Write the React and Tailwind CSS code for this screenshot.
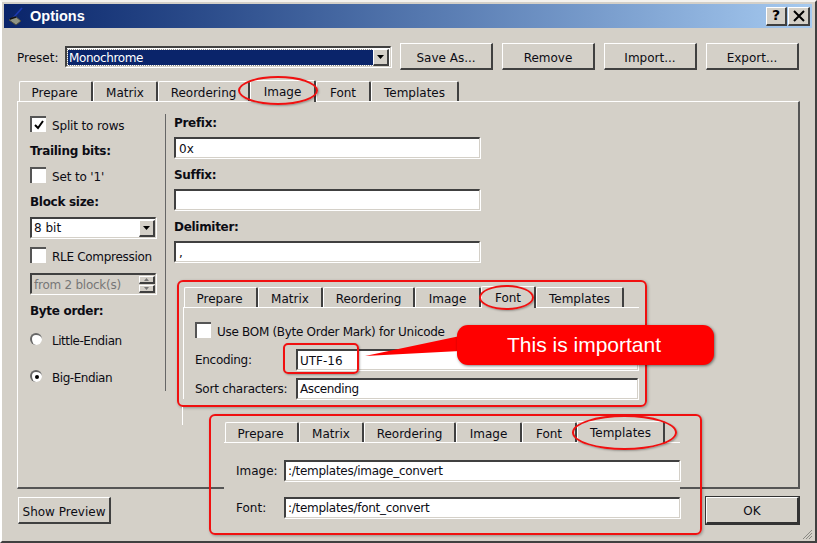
const tabs = [
  ['Prepare', 74],
  ['Matrix', 65],
  ['Reordering', 92],
  ['Image', 66],
  ['Font', 55],
  ['Templates', 88],
];

const raised = 'border-t border-l border-t-white border-l-white border-r-2 border-b-2 border-r-[#404040] border-b-[#404040]';
const sunken = 'border-t-2 border-l-2 border-t-[#404040] border-l-[#404040] border-r border-b border-r-[#d4d0c8] border-b-[#d4d0c8] shadow-[1px_1px_0_#fff]';

function Arrow() {
  return (
    <svg width="7" height="4" viewBox="0 0 7 4"><path d="M0 0h7L3.500 4z" fill="#000" /></svg>
  );
}

function TabBar({ selected }) {
  return (
    <div className="flex items-end h-[22px]">
      {tabs.map(([label, w], i) => (
        <div
          key={label}
          style={{ width: w }}
          className={
            'flex items-center justify-center border-t border-l border-t-white border-l-white border-r-2 border-r-[#404040] rounded-t-[2px] ' +
            (i === 0 ? 'pr-[2px] ' : '') +
            (i === selected ? 'h-[22px] relative z-10 -mb-px pt-px bg-[#d4d0c8]' : 'h-[20px] pt-[2px]')
          }
        >
          {label}
        </div>
      ))}
    </div>
  );
}

function Button({ w, children }) {
  return (
    <div style={{ width: w }} className={`h-[27px] pt-[3px] ${raised} flex items-center justify-center`}>
      {children}
    </div>
  );
}

function Field({ className = '', children }) {
  return (
    <div className={`${sunken} h-[21px] bg-white flex items-center pl-[2px] ${className}`}>{children}</div>
  );
}

function Heading({ className, children }) {
  return <div className={`h-[16px] pt-px font-bold tracking-[-0.3px] ${className}`}>{children}</div>;
}

function Check({ checked, label, tight = 'tracking-[-0.15px]' }) {
  return (
    <div className="flex items-center h-[16px] whitespace-nowrap">
      <div className="w-[16px] h-[16px] bg-white border-t-2 border-l-2 border-t-[#555] border-l-[#555] flex items-center justify-center shrink-0">
        {checked && (
          <svg width="10" height="10" viewBox="0 0 10 10">
            <path d="M1 5l3 3 5-7" fill="none" stroke="#000" strokeWidth="2" />
          </svg>
        )}
      </div>
      <span className={`ml-[6px] mt-[3px] ${tight}`}>{label}</span>
    </div>
  );
}

function Radio({ on, label, className }) {
  return (
    <div className={`flex h-[16px] ${className}`}>
      <div className="w-[12px] h-[12px] mt-px rounded-full bg-white border-t-2 border-l-2 border-t-[#666] border-l-[#666] flex items-center justify-center shrink-0">
        {on && <div className="w-[4px] h-[4px] rounded-full bg-black" />}
      </div>
      <span className="ml-[10px] tracking-[-0.45px]">{label}</span>
    </div>
  );
}

function ComboArrow() {
  return (
    <div className={`${raised} w-[16px] h-[17px] ml-auto flex items-center justify-center bg-[#d4d0c8]`}>
      <Arrow />
    </div>
  );
}

function SpinPart({ up }) {
  return (
    <div className={`${raised} w-[16px] h-[8px] flex items-center justify-center`}>
      <svg width="5" height="3" viewBox="0 0 5 3">
        <path d={up ? 'M0 3h5L2.500 0z' : 'M0 0h5L2.500 3z'} fill="#777" />
      </svg>
    </div>
  );
}

function Ring({ className }) {
  return <div className={`absolute rounded-[50%] border-2 border-[#f01010] shadow-[1px_1px_2px_rgba(0,0,0,0.3)] z-20 ${className}`} />;
}

export default function App() {
  return (
    <div
      className="relative w-[817px] h-[543px] overflow-hidden bg-[#d4d0c8] text-[12px] text-[#0c0c14] p-[3px] pt-[2px] border-l-2 border-t-2 border-l-white border-t-[#f4f2ee] border-r-2 border-b-2 border-r-[#404040] border-b-[#404040]"
      style={{ fontFamily: '"DejaVu Sans", sans-serif' }}
    >
      {/* title bar */}
      <div className="h-[24px] -ml-px flex items-center bg-gradient-to-r from-[#0a246a] to-[#a6caf0] text-white pl-[4px] pr-[2px]">
        <svg width="19" height="19" viewBox="0 0 19 19" className="shrink-0">
          <path d="M1 13l6-4 6 5-5 4z" fill="#8f9484" stroke="#4a4a40" strokeWidth="1" />
          <path d="M14 1L6 10" stroke="#1c3ab0" strokeWidth="1.600" />
          <path d="M2 12l6-2" stroke="#111" strokeWidth="1.500" />
        </svg>
        <span
          className="ml-[3px] pt-px font-bold text-[14.5px]"
          style={{ fontFamily: '"Liberation Sans", sans-serif' }}
        >
          Options
        </span>
        <div className={`${raised} ml-auto w-[21px] h-[19px] flex items-center justify-center bg-[#d4d0c8] text-black font-bold text-[14px]`}>?</div>
        <div className={`${raised} ml-px w-[22px] h-[19px] flex items-center justify-center bg-[#d4d0c8]`}>
          <svg width="12" height="12" viewBox="0 0 12 12"><path d="M1 1l10 10M11 1L1 11" stroke="#000" strokeWidth="2" /></svg>
        </div>
      </div>

      {/* preset row */}
      <div className="flex items-center h-[27px] mt-[15px] ml-[12px]">
        <span className="w-[48px] pt-[2px]">Preset:</span>
        <div className={`${sunken} w-[326px] h-[21px] bg-white flex items-center p-px`}>
          <div className="flex-1 h-[15px] bg-[#0a246a] text-white flex items-center pl-px pt-px tracking-[-0.4px] outline-dotted outline-1 outline-[#8a8a8a]">Monochrome</div>
          <ComboArrow />
        </div>
        <div className="ml-[9px]"><Button w={93}>Save As...</Button></div>
        <div className="ml-[9px]"><Button w={93}>Remove</Button></div>
        <div className="ml-[9px]"><Button w={93}>Import...</Button></div>
        <div className="ml-[9px]"><Button w={93}>Export...</Button></div>
      </div>

      {/* main tabs */}
      <div className="ml-[14px] mt-[9px]">
        <TabBar selected={3} />
      </div>

      <div className="ml-[12px] w-[783px] h-[388px] border-t border-l border-t-white border-l-white border-r-2 border-b-2 border-r-[#555] border-b-[#555] flex">
        <div className="w-[126px] ml-[12px] shrink-0 flex flex-col">
          <div className="mt-[14px]"><Check checked label="Split to rows" /></div>
          <Heading className="mt-[9px]">Trailing bits:</Heading>
          <div className="mt-[10px]"><Check label="Set to '1'" /></div>
          <Heading className="mt-[9px]">Block size:</Heading>
          <Field className="mt-[9px]">
            <span className="-mt-px">8 bit</span>
            <ComboArrow />
          </Field>
          <div className="mt-[9px]"><Check label="RLE Compression" tight="tracking-[-0.3px]" /></div>
          <Field className="mt-[10px] !bg-[#d4d0c8] text-[#777]">
            <span className="whitespace-nowrap pt-[2px] tracking-[-0.25px]">from 2 block(s)</span>
            <div className="ml-auto w-[16px] flex flex-col gap-px">
              <SpinPart up />
              <SpinPart />
            </div>
          </Field>
          <Heading className="mt-[7px]">Byte order:</Heading>
          <Radio label="Little-Endian" className="mt-[15px]" />
          <Radio on label="Big-Endian" className="mt-[21px]" />
        </div>

        <div className="w-px h-[277px] mt-[12px] ml-[9px] bg-[#666] shrink-0" />

        <div className="w-[306px] ml-[8px] shrink-0 flex flex-col">
          <Heading className="mt-[11px]">Prefix:</Heading>
          <Field className="mt-[8px] pl-[3px] pt-[2px]">0x</Field>
          <Heading className="mt-[7px]">Suffix:</Heading>
          <Field className="mt-[8px]" />
          <Heading className="mt-[7px]">Delimiter:</Heading>
          <Field className="mt-[8px] pl-[3px] pt-[2px]">,</Field>
        </div>
      </div>

      {/* bottom buttons */}
      <div className="flex justify-between ml-[13px] w-[781px] mt-[8px]">
        <Button w={93}>Show Preview</Button>
        <div className="border-t border-l border-t-white border-l-white border-r-2 border-b-2 border-r-[#333] border-b-[#333] outline outline-1 outline-[#333] w-[93px] h-[27px] pt-[2px] flex items-center justify-center">OK</div>
      </div>

      {/* size grip */}
      <svg width="11" height="11" viewBox="0 0 11 11" className="absolute right-[2px] bottom-[1px]">
        <path d="M10 1L1 10M10 4L4 10M10 7L7 10" stroke="#8a8a84" strokeWidth="1" />
      </svg>

      {/* annotation: encoding tab */}
      <div className="absolute left-[175px] top-[278px] w-[470px] h-[127px] border-2 border-[#f01010] rounded-[6px] shadow-[1px_1px_3px_rgba(0,0,0,0.3)]">
        <div className="ml-[4px] mt-[3px] w-[456px]">
          <div className="ml-px"><TabBar selected={4} /></div>
          <div className="border-t border-l border-t-white border-l-white pl-[11px] h-[92px] flex flex-col">
            <div className="mt-[14px]"><Check label="Use BOM (Byte Order Mark) for Unicode" tight="tracking-[-0.3px]" /></div>
            <div className="flex items-center mt-[11px]">
              <span className="w-[101px] tracking-[-0.3px]">Encoding:</span>
              <Field className="w-[342px] pl-[2px] pt-[2px]">UTF-16</Field>
            </div>
            <div className="flex items-center mt-[8px]">
              <span className="w-[101px] tracking-[-0.25px]">Sort characters:</span>
              <Field className="w-[342px] pl-[2px] tracking-[-0.4px]">Ascending</Field>
            </div>
          </div>
        </div>
      </div>
      <div className="absolute left-[180px] top-[405px] w-px h-[18px] bg-white" />

      {/* annotation: templates tab */}
      <div className="absolute left-[207px] top-[412px] w-[493px] h-[121px] border-2 border-[#f01010] rounded-[6px] shadow-[1px_1px_3px_rgba(0,0,0,0.3)]">
        <div className="ml-[13px] mt-[4px] w-[456px] h-[106px] bg-[#d4d0c8]">
          <div className="ml-px"><TabBar selected={5} /></div>
          <div className="border-t border-t-white pl-[12px] flex flex-col">
            <div className="flex items-center mt-[17px]">
              <span className="w-[48px]">Image:</span>
              <Field className="w-[396px] pl-[2px] tracking-[-0.28px]">:/templates/image_convert</Field>
            </div>
            <div className="flex items-center mt-[16px]">
              <span className="w-[48px]">Font:</span>
              <Field className="w-[396px] pl-[2px] tracking-[-0.28px]">:/templates/font_convert</Field>
            </div>
          </div>
        </div>
      </div>

      {/* red rings */}
      <Ring className="left-[236px] top-[74px] w-[80px] h-[29px]" />
      <Ring className="left-[477px] top-[283px] w-[55px] h-[25px]" />
      <Ring className="left-[570px] top-[413px] w-[105px] h-[35px]" />
      <div className="absolute left-[281px] top-[341px] w-[76px] h-[31px] border-2 border-[#f01010] rounded-[5px] shadow-[1px_1px_2px_rgba(0,0,0,0.3)] z-20" />

      {/* callout */}
      <svg width="100" height="22" viewBox="0 0 100 22" className="absolute left-[361px] top-[334px] z-30">
        <path d="M2 20L97 0v15z" fill="#ff0000" />
      </svg>
      <div
        className="absolute left-[455px] top-[323px] w-[257px] h-[40px] rounded-[11px] bg-[#ff0000] text-white text-[21px] flex items-center justify-center shadow-[1px_1px_3px_rgba(0,0,0,0.5)] z-30 pr-[3px]"
        style={{ fontFamily: '"Liberation Sans", Arial, sans-serif' }}
      >
        This is important
      </div>
    </div>
  );
}
